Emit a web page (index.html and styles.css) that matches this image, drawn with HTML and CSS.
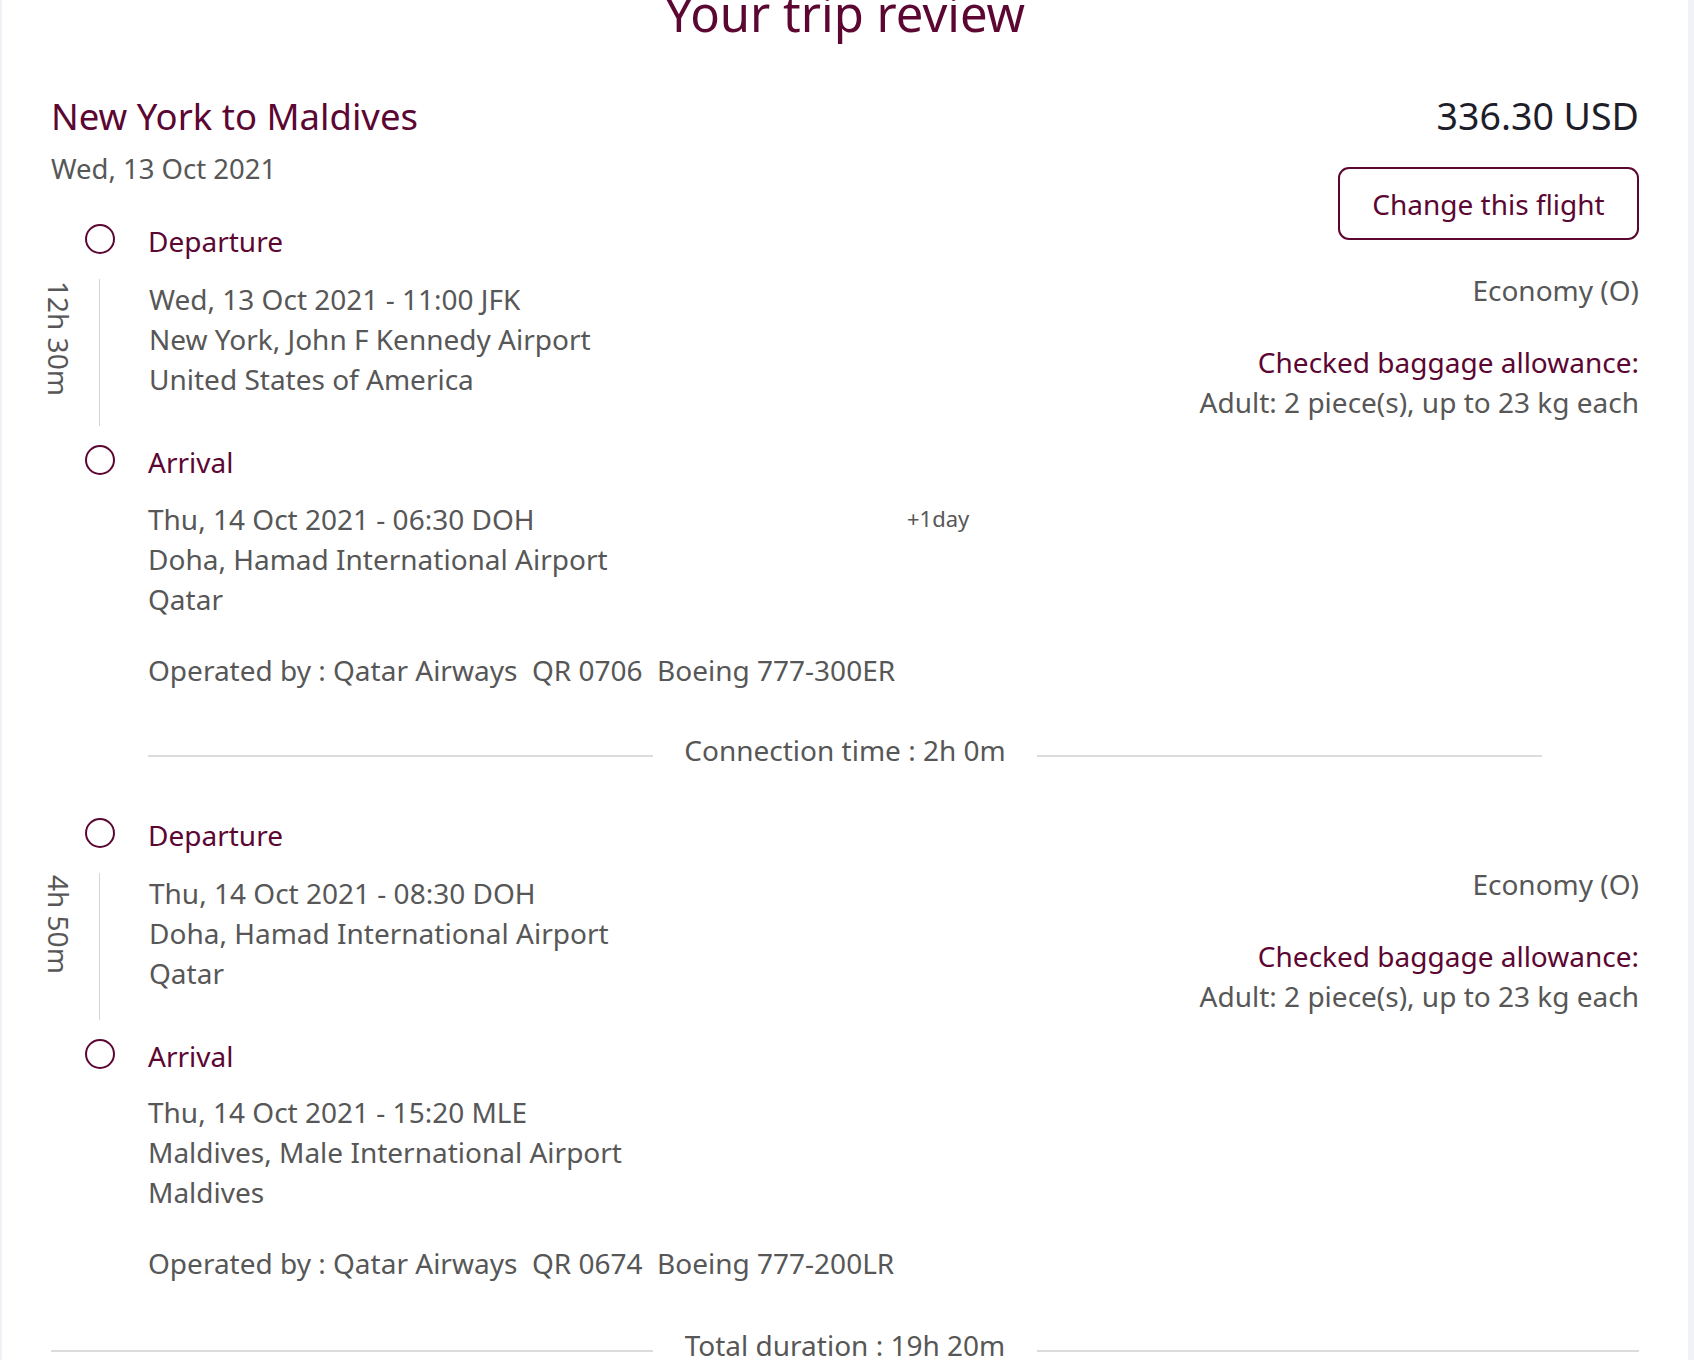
FILE: index.html
```html
<!DOCTYPE html>
<html lang="en">
<head>
<meta charset="utf-8">
<title>Your trip review</title>
<link rel="stylesheet" href="styles.css">
</head>
<body>
<main class="page">
  <h1 class="title">Your trip review</h1>

  <header class="trip-head">
    <div class="trip-left">
      <h2 class="route">New York to Maldives</h2>
      <div class="trip-date">Wed, 13 Oct 2021</div>
    </div>
    <div class="trip-right">
      <div class="price">336.30 USD</div>
      <button class="change-btn" type="button">Change this flight</button>
    </div>
  </header>

  <section class="segment">
    <div class="stop"><span class="dot"></span><span class="stop-label">Departure</span></div>
    <div class="leg-row">
      <div class="duration"><span class="duration-text">12h 30m</span></div>
      <div class="leg-details">
        <div class="line">Wed, 13 Oct 2021 - 11:00 JFK</div>
        <div class="line">New York, John F Kennedy Airport</div>
        <div class="line">United States of America</div>
      </div>
      <div class="leg-info">
        <div class="cabin">Economy (O)</div>
        <div class="bag-title">Checked baggage allowance:</div>
        <div class="bag-text">Adult: 2 piece(s), up to 23 kg each</div>
      </div>
    </div>
    <div class="stop stop-arrival"><span class="dot"></span><span class="stop-label">Arrival</span></div>
    <div class="arrival-details">
      <div class="line"><span class="first-text">Thu, 14 Oct 2021 - 06:30 DOH</span><span class="plus-day">+1day</span></div>
      <div class="line">Doha, Hamad International Airport</div>
      <div class="line">Qatar</div>
    </div>
    <div class="operated">Operated by : Qatar Airways&nbsp;&nbsp;QR 0706&nbsp;&nbsp;Boeing 777-300ER</div>
  </section>

  <div class="divider divider-inner">
    <span class="rule"></span>
    <span class="divider-text">Connection time : 2h 0m</span>
    <span class="rule"></span>
  </div>

  <section class="segment segment-second">
    <div class="stop"><span class="dot"></span><span class="stop-label">Departure</span></div>
    <div class="leg-row">
      <div class="duration"><span class="duration-text">4h 50m</span></div>
      <div class="leg-details">
        <div class="line">Thu, 14 Oct 2021 - 08:30 DOH</div>
        <div class="line">Doha, Hamad International Airport</div>
        <div class="line">Qatar</div>
      </div>
      <div class="leg-info">
        <div class="cabin">Economy (O)</div>
        <div class="bag-title">Checked baggage allowance:</div>
        <div class="bag-text">Adult: 2 piece(s), up to 23 kg each</div>
      </div>
    </div>
    <div class="stop stop-arrival"><span class="dot"></span><span class="stop-label">Arrival</span></div>
    <div class="arrival-details arrival-last">
      <div class="line">Thu, 14 Oct 2021 - 15:20 MLE</div>
      <div class="line">Maldives, Male International Airport</div>
      <div class="line">Maldives</div>
    </div>
    <div class="operated">Operated by : Qatar Airways&nbsp;&nbsp;QR 0674&nbsp;&nbsp;Boeing 777-200LR</div>
  </section>

  <div class="divider divider-total">
    <span class="rule"></span>
    <span class="divider-text">Total duration : 19h 20m</span>
    <span class="rule"></span>
  </div>
</main>
</body>
</html>
```

FILE: styles.css
```css
html, body {
  margin: 0;
  padding: 0;
}

body {
  background: #f1f1f8;
  font-family: "Noto Sans", "Open Sans", sans-serif;
  color: #575757;
  height: 1360px;
  overflow: hidden;
}

.page {
  background: #ffffff;
  margin: 0 6px 0 2px;
  padding: 0 49px 0 49px;
  min-height: 1360px;
  box-sizing: border-box;
}

.title {
  margin: 0;
  font-size: 49px;
  font-weight: 400;
  line-height: 26px;
  text-align: center;
  color: #5c0632;
}

.trip-head {
  display: flex;
  justify-content: space-between;
  align-items: flex-start;
  margin-top: 70px;
}

.route {
  margin: 0;
  font-size: 36.5px;
  font-weight: 400;
  line-height: 40px;
  color: #5c0632;
}

.trip-date {
  font-size: 27.5px;
  line-height: 40px;
  margin-top: 13px;
}

.trip-right {
  display: flex;
  flex-direction: column;
  align-items: flex-end;
}

.price {
  font-size: 37.5px;
  line-height: 40px;
  color: #1e1e2a;
}

.change-btn {
  margin-top: 31px;
  margin-bottom: -50px;
  width: 301px;
  height: 73px;
  border: 2px solid #5c0632;
  border-radius: 11px;
  background: #ffffff;
  color: #5c0632;
  font-family: "Noto Sans", "Open Sans", sans-serif;
  font-size: 28px;
  padding: 0;
}

.segment {
  margin-top: 31px;
}

.segment-second {
  margin-top: 45px;
}

.stop {
  display: flex;
  align-items: center;
  height: 40px;
}

.stop-arrival {
  margin-top: 16px;
}

.dot {
  width: 30px;
  height: 30px;
  box-sizing: border-box;
  border: 2px solid #5c0632;
  border-radius: 50%;
  margin-left: 34px;
  margin-top: -5px;
  flex: none;
}

.stop-label {
  margin-left: 33px;
  font-size: 28px;
  line-height: 40px;
  color: #5c0632;
}

.line {
  font-size: 28px;
  line-height: 40px;
  height: 40px;
  white-space: nowrap;
}

.leg-row {
  display: flex;
  align-items: flex-start;
  margin-top: 18px;
}

.duration {
  width: 48px;
  flex: none;
  align-self: stretch;
  padding-top: 2px;
}

.duration-text {
  display: block;
  writing-mode: vertical-rl;
  font-size: 28px;
  line-height: 16px;
  width: 16px;
  white-space: nowrap;
}

.leg-details {
  flex: 1;
  border-left: 1.5px solid #d4d4d4;
  padding: 0 0 27px 49px;
}

.leg-info {
  margin-top: -9px;
  text-align: right;
  font-size: 28px;
  line-height: 40px;
  white-space: nowrap;
}

.bag-title {
  margin-top: 32px;
  color: #5c0632;
}

.arrival-details {
  margin: 17px 0 0 97px;
}

.arrival-last {
  margin-top: 16px;
}

.first-text {
  display: inline-block;
  width: 759px;
}

.plus-day {
  font-size: 22px;
  line-height: 1;
  vertical-align: 3px;
}

.operated {
  margin: 31px 0 0 97px;
  font-size: 28px;
  line-height: 40px;
  white-space: nowrap;
}

.divider {
  display: grid;
  grid-template-columns: 1fr 384px 1fr;
  align-items: center;
  margin-top: 40px;
}

.divider-inner {
  margin-left: 97px;
  margin-right: 97px;
}

.divider-total {
  margin-top: 42px;
}

.rule {
  display: block;
  height: 2px;
  background: #dcdcdc;
  margin-top: 12px;
}

.divider-text {
  text-align: center;
  font-size: 28px;
  line-height: 40px;
  white-space: nowrap;
}
```
